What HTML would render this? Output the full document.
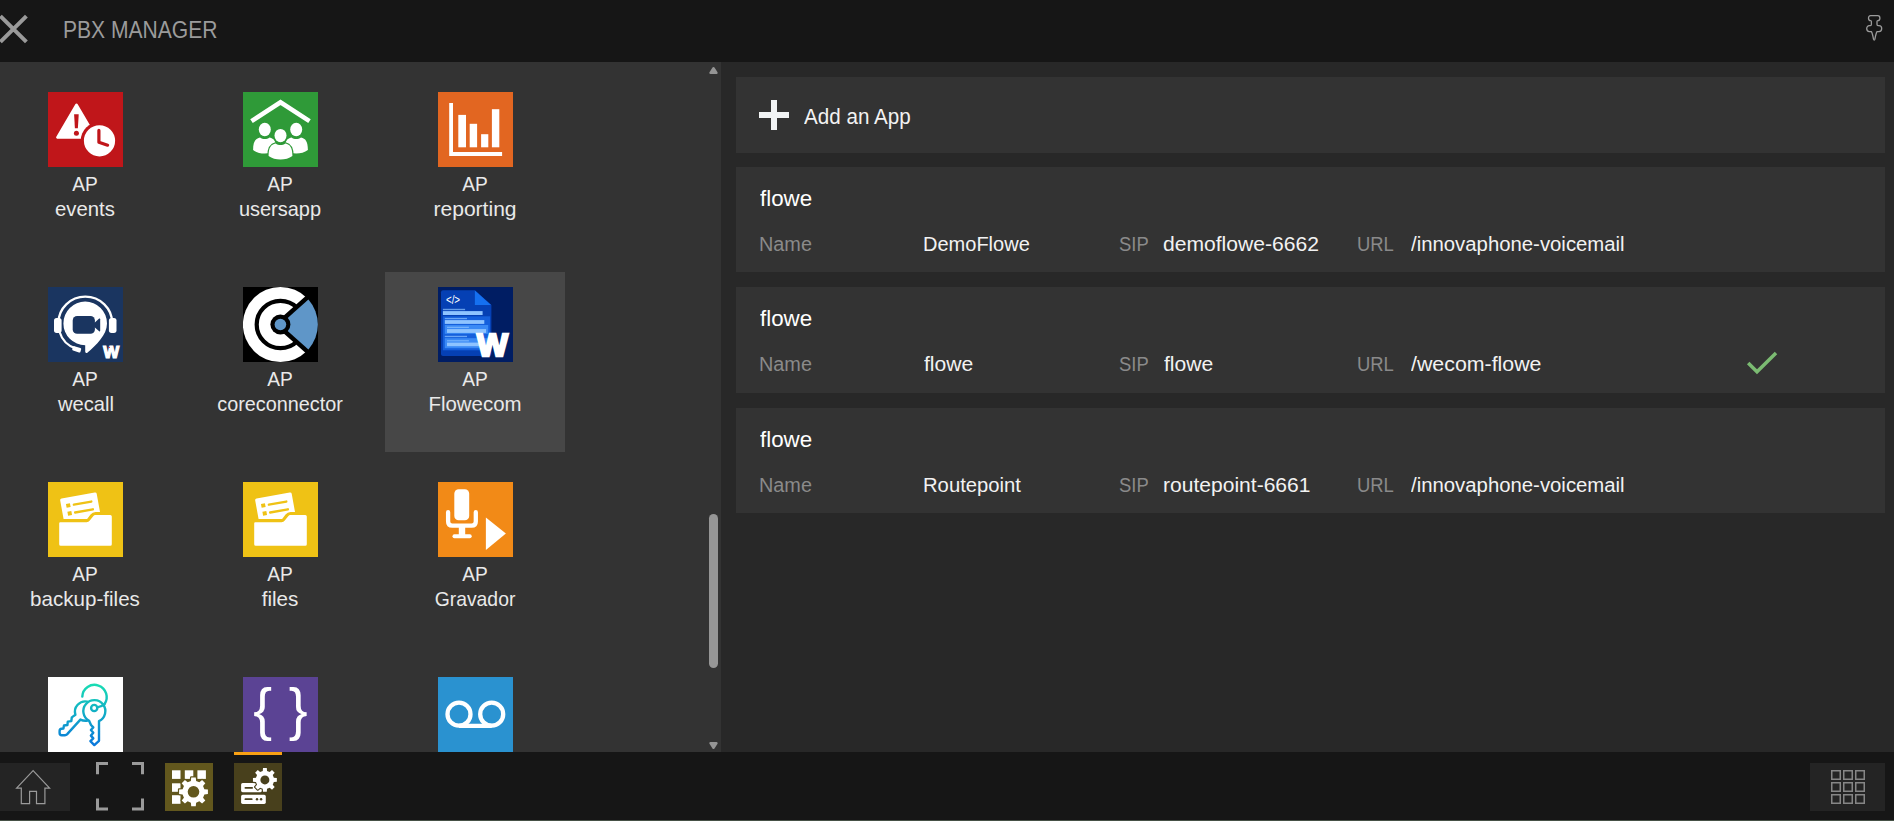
<!DOCTYPE html>
<html lang="en"><head><meta charset="utf-8"><title>PBX Manager</title>
<style>
html,body{margin:0;padding:0}
body{width:1894px;height:821px;overflow:hidden;background:#282828;position:relative;font-family:"Liberation Sans",sans-serif}
.abs{position:absolute}
.t{position:absolute;white-space:nowrap;display:block;font-weight:400}
#hdr{position:absolute;left:0;top:0;width:1894px;height:62px;background:#161616}
#apps{position:absolute;left:0;top:62px;width:721px;height:690px;background:#333333;overflow:hidden}
#inst{position:absolute;left:721px;top:62px;width:1173px;height:690px;background:#282828;overflow:hidden}
#bot{position:absolute;left:0;top:752px;width:1894px;height:68px;background:#161616}
#botline{position:absolute;left:0;top:820px;width:1894px;height:1px;background:#465146}
.tile{position:absolute;width:180px;height:180px}
.tile.sel{background:#474747}
.card{position:absolute;left:15px;width:1149px;background:#333333}
.ic{position:absolute;width:75px;height:75px;overflow:hidden}
.ic svg{display:block}
.btn{position:absolute;background:#242424}
</style></head><body>
<header id="hdr">
<svg class="abs" style="left:0px;top:0px" width="62" height="62" viewBox="0 0 62 62"><path d="M0.4 16.2 L26.4 41.9 M26.4 16.2 L0.4 41.9" stroke="#9a9a9a" stroke-width="4" fill="none"/></svg>
<span class="t" id="title" style="left:62.97px;top:13.78px;font-size:24px;line-height:31px;color:#9b9b9b;transform:scaleX(0.8776);transform-origin:0 0">PBX MANAGER</span>
<svg class="abs" style="left:1850px;top:5px" width="44" height="50" viewBox="0 0 44 50"><path d="M20.6 10.7 H27.8 C30.6 10.7 30.6 15.6 27.8 15.6 C27.2 15.6 27 16 27 16.6 V19.6 C27 20.2 27.4 20.6 28 20.6 H29 C32.6 20.6 32.6 26.6 29 26.6 H27 Q25.9 28.4 24.9 34.2 C24.6 35.4 23.8 35.4 23.5 34.2 Q22.5 28.4 21.4 26.6 H19.4 C15.8 26.6 15.8 20.6 19.4 20.6 H20.4 C21 20.6 21.4 20.2 21.4 19.6 V16.6 C21.4 16 21.2 15.6 20.6 15.6 C17.8 15.6 17.8 10.7 20.6 10.7 Z" fill="none" stroke="#9b9b9b" stroke-width="1.3" stroke-linejoin="round"/></svg>
</header>
<section id="apps">
<div class="tile" style="left:-5px;top:15px">
<div class="ic" style="left:53px;top:15px"><svg width="75" height="75" viewBox="0 0 75 75"><rect width="75" height="75" fill="#c0161a"/>
<path d="M28.5 13 L9.5 45.4 H47.6 Z" fill="#fff" stroke="#fff" stroke-width="2.8" stroke-linejoin="round"/>
<path d="M26.1 22.2 h4.6 l-0.8 14 h-3 z" fill="#c0161a"/><circle cx="28.4" cy="41.3" r="2.5" fill="#c0161a"/>
<circle cx="51.5" cy="48.8" r="18.8" fill="#c0161a"/>
<circle cx="51.5" cy="48.8" r="15.6" fill="#fff"/>
<path d="M50.9 38.4 V50.2 L59.6 53.2" stroke="#c0161a" stroke-width="3.2" fill="none" stroke-linecap="round" stroke-linejoin="round"/></svg></div>
<span class="t" id="ap00" style="left:90.49px;top:93.22px;font-size:21px;line-height:27px;color:#e9e9e9;transform:translateX(-50%) scaleX(0.9122);transform-origin:50% 0">AP</span>
<span class="t" id="nm00" style="left:90.01px;top:118.22px;font-size:21px;line-height:27px;color:#e9e9e9;transform:translateX(-50%) scaleX(0.9674);transform-origin:50% 0">events</span>
</div>
<div class="tile" style="left:190px;top:15px">
<div class="ic" style="left:53px;top:15px"><svg width="75" height="75" viewBox="0 0 75 75"><rect width="75" height="75" fill="#2f9a38"/>
<path d="M8.5 29.1 L37.5 10.2 L66.5 29.1" fill="none" stroke="#fff" stroke-width="4.6"/>
<ellipse cx="21.8" cy="37.5" rx="6" ry="6.7" fill="#fff"/><ellipse cx="53.2" cy="37.5" rx="6" ry="6.7" fill="#fff"/>
<path d="M10.1 58 C10.1 49.5 12.5 46.6 17 45.6 C20 47.6 23.6 47.6 26.6 45.6 C31 46.6 33.5 49.5 33.5 58 C27 62.8 16.5 62.8 10.1 58 Z" fill="#fff"/>
<path d="M64.9 58 C64.9 49.5 62.5 46.6 58 45.6 C55 47.6 51.4 47.6 48.4 45.6 C44 46.6 41.5 49.5 41.5 58 C48 62.8 58.5 62.8 64.9 58 Z" fill="#fff"/>
<ellipse cx="37.5" cy="43.6" rx="6" ry="6.7" fill="#fff" stroke="#2f9a38" stroke-width="2.6" paint-order="stroke"/>
<path d="M25.6 64 C25.6 55.5 28 52.6 32.6 51.6 C35.6 53.6 39.4 53.6 42.4 51.6 C47 52.6 49.4 55.5 49.4 64 C43 68.8 32 68.8 25.6 64 Z" fill="#fff" stroke="#2f9a38" stroke-width="2.6" paint-order="stroke"/></svg></div>
<span class="t" id="ap01" style="left:90.49px;top:93.22px;font-size:21px;line-height:27px;color:#e9e9e9;transform:translateX(-50%) scaleX(0.9122);transform-origin:50% 0">AP</span>
<span class="t" id="nm01" style="left:89.62px;top:118.22px;font-size:21px;line-height:27px;color:#e9e9e9;transform:translateX(-50%) scaleX(0.9510);transform-origin:50% 0">usersapp</span>
</div>
<div class="tile" style="left:385px;top:15px">
<div class="ic" style="left:53px;top:15px"><svg width="75" height="75" viewBox="0 0 75 75"><rect width="75" height="75" fill="#e26621"/>
<path d="M11.2 11 H15 V60 H64.1 V64.1 H11.2 Z" fill="#fff"/>
<rect x="20.3" y="22.9" width="7.7" height="32.4" fill="#fff"/><rect x="31.7" y="31.8" width="7.4" height="23.5" fill="#fff"/>
<rect x="43.1" y="42.2" width="7.2" height="13.1" fill="#fff"/><rect x="53.9" y="17.2" width="7.4" height="38.1" fill="#fff"/></svg></div>
<span class="t" id="ap02" style="left:90.49px;top:93.22px;font-size:21px;line-height:27px;color:#e9e9e9;transform:translateX(-50%) scaleX(0.9122);transform-origin:50% 0">AP</span>
<span class="t" id="nm02" style="left:90px;top:118.22px;font-size:21px;line-height:27px;color:#e9e9e9;transform:translateX(-50%) scaleX(1.0028);transform-origin:50% 0">reporting</span>
</div>
<div class="tile" style="left:-5px;top:210px">
<div class="ic" style="left:53px;top:15px"><svg width="75" height="75" viewBox="0 0 75 75"><rect width="75" height="75" fill="#1a3560"/>
<path d="M10.4 36 A26.9 26.3 0 0 1 64.2 36" fill="none" stroke="#fff" stroke-width="2.3"/>
<rect x="6" y="30.9" width="7.6" height="15" rx="2.6" fill="#fff"/><rect x="60.9" y="30.9" width="7.6" height="15" rx="2.6" fill="#fff"/>
<path d="M11.6 45 C14 53 20 59 28 61.6" fill="none" stroke="#fff" stroke-width="2.2"/>
<rect x="24.4" y="60" width="8.6" height="4.6" rx="1.2" fill="#fff" transform="rotate(18 28.7 62.3)"/>
<path d="M37.2 14.6 A21.8 21.8 0 0 1 59 36.4 C59 48 48 58 39.6 65.6 C38.6 66.6 37.2 66 37.2 64.6 V58.2 A21.8 21.8 0 0 1 37.2 14.6 Z" fill="#fff"/>
<rect x="24.7" y="29" width="22.2" height="17.8" rx="4.4" fill="#1a3560"/>
<path d="M46 36.2 L51.2 31.6 Q52.2 31 52.2 32.2 V43.6 Q52.2 44.8 51.2 44.2 L46 39.8 Z" fill="#1a3560"/>
<text x="55.3" y="71.2" font-family="Liberation Sans, sans-serif" font-weight="700" font-size="16.3" fill="#fff" stroke="#fff" stroke-width="1.2" stroke-linejoin="miter" textLength="15.9" lengthAdjust="spacingAndGlyphs">W</text>
<circle cx="61.2" cy="60.4" r="0.7" fill="#e02030"/></svg></div>
<span class="t" id="ap10" style="left:90.49px;top:93.22px;font-size:21px;line-height:27px;color:#e9e9e9;transform:translateX(-50%) scaleX(0.9122);transform-origin:50% 0">AP</span>
<span class="t" id="nm10" style="left:90.83px;top:118.22px;font-size:21px;line-height:27px;color:#e9e9e9;transform:translateX(-50%) scaleX(0.9604);transform-origin:50% 0">wecall</span>
</div>
<div class="tile" style="left:190px;top:210px">
<div class="ic" style="left:53px;top:15px"><svg width="75" height="75" viewBox="0 0 75 75"><rect width="75" height="75" fill="#000"/>
<circle cx="37.4" cy="37.5" r="37.5" fill="#fff"/>
<circle cx="37.4" cy="37.5" r="23.7" fill="none" stroke="#000" stroke-width="4.2"/>
<path d="M79.3 0.3 L37.4 37.5 L79.3 74.7" fill="#000" stroke="#000" stroke-width="9" stroke-linejoin="miter"/>
<path d="M37.4 37.5 L65.4 12.6 A37.5 37.5 0 0 1 65.4 62.4 Z" fill="#5f96c8"/>
<circle cx="37.4" cy="37.5" r="10" fill="#000"/><circle cx="37.4" cy="37.5" r="5.8" fill="#5f96c8"/></svg></div>
<span class="t" id="ap11" style="left:90.49px;top:93.22px;font-size:21px;line-height:27px;color:#e9e9e9;transform:translateX(-50%) scaleX(0.9122);transform-origin:50% 0">AP</span>
<span class="t" id="nm11" style="left:89.83px;top:118.22px;font-size:21px;line-height:27px;color:#e9e9e9;transform:translateX(-50%) scaleX(0.9435);transform-origin:50% 0">coreconnector</span>
</div>
<div class="tile sel" style="left:385px;top:210px">
<div class="ic" style="left:53px;top:15px"><svg width="75" height="75" viewBox="0 0 75 75"><rect width="75" height="75" fill="#001d63"/>
<path d="M5 3.3 H36.9 L53.4 18 V67.1 Q53.4 69.1 51.4 69.1 H5 Q3 69.1 3 67.1 V5.3 Q3 3.3 5 3.3 Z" fill="#0540b4"/>
<path d="M36.9 3.6 L53 18.1 H36.9 Z" fill="#1570f0"/>
<rect x="4.9" y="29.3" width="47.2" height="34" fill="#1560dc"/>
<rect x="6.8" y="38" width="43.4" height="8.8" fill="#3a8af5"/><rect x="6.8" y="51.2" width="43.4" height="10" fill="#3a8af5"/>
<g fill="#8ec4ff">
<rect x="4.9" y="21.8" width="22.2" height="1.4" opacity=".7"/><rect x="4.9" y="24.1" width="39.7" height="3.9"/>
<rect x="6.8" y="30.9" width="22.2" height="1.3" opacity=".7"/><rect x="6.8" y="33.1" width="39.5" height="3.8"/>
<rect x="9" y="39.7" width="21.9" height="1.3" opacity=".7"/><rect x="9" y="42.1" width="39.1" height="3.8"/>
<rect x="6.8" y="48.8" width="22.2" height="1.3" opacity=".7"/>
<rect x="9" y="53.2" width="21.9" height="1.2" opacity=".7"/><rect x="9" y="55.6" width="32.3" height="3.6"/>
</g>
<text x="7.9" y="17.3" font-family="Liberation Sans, sans-serif" font-size="13" fill="#fff" textLength="14.2" lengthAdjust="spacingAndGlyphs">&lt;/&gt;</text>
<text x="39" y="68.6" font-family="Liberation Sans, sans-serif" font-weight="700" font-size="31.8" fill="#fff" stroke="#fff" stroke-width="2.4" stroke-linejoin="miter" textLength="30.9" lengthAdjust="spacingAndGlyphs">W</text></svg></div>
<span class="t" id="ap12" style="left:90.48px;top:93.22px;font-size:21px;line-height:27px;color:#e9e9e9;transform:translateX(-50%) scaleX(0.9124);transform-origin:50% 0">AP</span>
<span class="t" id="nm12" style="left:90px;top:118.22px;font-size:21px;line-height:27px;color:#e9e9e9;transform:translateX(-50%) scaleX(0.9724);transform-origin:50% 0">Flowecom</span>
</div>
<div class="tile" style="left:-5px;top:405px">
<div class="ic" style="left:53px;top:15px"><svg width="75" height="75" viewBox="0 0 75 75"><rect width="75" height="75" fill="#efc215"/>
<g transform="translate(11.9 16.8) rotate(-10.3)"><rect x="0" y="0" width="37.1" height="28" rx="1.7" fill="#fff"/>
<rect x="5.05" y="6.1" width="4" height="4" fill="#efc215"/><rect x="11.5" y="7.15" width="20.1" height="2.3" rx="1.15" fill="#efc215"/>
<rect x="5.05" y="14.1" width="4" height="4" fill="#efc215"/><rect x="11.4" y="15.05" width="20.3" height="2.3" rx="1.15" fill="#efc215"/></g>
<path d="M12.2 40.2 H38.6 Q40.6 40.2 41.8 38.6 L45 34.4 Q46 33.1 47.6 33.1 H62.3 Q63.8 33.1 63.8 34.6 V62.3 Q63.8 63.8 62.3 63.8 H12.7 Q11.2 63.8 11.2 62.3 V41.2 Q11.2 40.2 12.2 40.2 Z" fill="#fff" stroke="#efc215" stroke-width="6.2" stroke-linejoin="round" paint-order="stroke"/></svg></div>
<span class="t" id="ap20" style="left:90.49px;top:93.22px;font-size:21px;line-height:27px;color:#e9e9e9;transform:translateX(-50%) scaleX(0.9122);transform-origin:50% 0">AP</span>
<span class="t" id="nm20" style="left:89.73px;top:118.22px;font-size:21px;line-height:27px;color:#e9e9e9;transform:translateX(-50%) scaleX(0.9794);transform-origin:50% 0">backup-files</span>
</div>
<div class="tile" style="left:190px;top:405px">
<div class="ic" style="left:53px;top:15px"><svg width="75" height="75" viewBox="0 0 75 75"><rect width="75" height="75" fill="#efc215"/>
<g transform="translate(11.9 16.8) rotate(-10.3)"><rect x="0" y="0" width="37.1" height="28" rx="1.7" fill="#fff"/>
<rect x="5.05" y="6.1" width="4" height="4" fill="#efc215"/><rect x="11.5" y="7.15" width="20.1" height="2.3" rx="1.15" fill="#efc215"/>
<rect x="5.05" y="14.1" width="4" height="4" fill="#efc215"/><rect x="11.4" y="15.05" width="20.3" height="2.3" rx="1.15" fill="#efc215"/></g>
<path d="M12.2 40.2 H38.6 Q40.6 40.2 41.8 38.6 L45 34.4 Q46 33.1 47.6 33.1 H62.3 Q63.8 33.1 63.8 34.6 V62.3 Q63.8 63.8 62.3 63.8 H12.7 Q11.2 63.8 11.2 62.3 V41.2 Q11.2 40.2 12.2 40.2 Z" fill="#fff" stroke="#efc215" stroke-width="6.2" stroke-linejoin="round" paint-order="stroke"/></svg></div>
<span class="t" id="ap21" style="left:90.49px;top:93.22px;font-size:21px;line-height:27px;color:#e9e9e9;transform:translateX(-50%) scaleX(0.9122);transform-origin:50% 0">AP</span>
<span class="t" id="nm21" style="left:90.34px;top:118.22px;font-size:21px;line-height:27px;color:#e9e9e9;transform:translateX(-50%) scaleX(0.9814);transform-origin:50% 0">files</span>
</div>
<div class="tile" style="left:385px;top:405px">
<div class="ic" style="left:53px;top:15px"><svg width="75" height="75" viewBox="0 0 75 75"><rect width="75" height="75" fill="#f28a17"/>
<rect x="16.3" y="7.3" width="14.9" height="31" rx="4.4" fill="#fff"/>
<path d="M10.1 30.2 V39.4 Q10.1 43.6 14.3 43.6 H33.6 Q37.8 43.6 37.8 39.4 V30.2" fill="none" stroke="#fff" stroke-width="4.3" stroke-linecap="round"/>
<rect x="20.8" y="44" width="6.4" height="10" fill="#fff"/><rect x="14.5" y="52.3" width="19.2" height="3.9" rx="1.9" fill="#fff"/>
<path d="M47.9 35.6 V67.9 L67.9 51.6 Z" fill="#fff"/></svg></div>
<span class="t" id="ap22" style="left:90.49px;top:93.22px;font-size:21px;line-height:27px;color:#e9e9e9;transform:translateX(-50%) scaleX(0.9122);transform-origin:50% 0">AP</span>
<span class="t" id="nm22" style="left:89.88px;top:118.22px;font-size:21px;line-height:27px;color:#e9e9e9;transform:translateX(-50%) scaleX(0.9223);transform-origin:50% 0">Gravador</span>
</div>
<div class="tile" style="left:-5px;top:600px">
<div class="ic" style="left:53px;top:15px"><svg width="75" height="75" viewBox="0 0 75 75"><defs><linearGradient id="kg" x1="0" y1="6" x2="0" y2="69" gradientUnits="userSpaceOnUse"><stop offset="0" stop-color="#18deb2"/><stop offset="1" stop-color="#0a76dc"/></linearGradient></defs>
<rect width="75" height="75" fill="#fff"/>
<g fill="none" stroke="url(#kg)" stroke-width="2.4" stroke-linecap="round" stroke-linejoin="round">
<path d="M34.3 19.6 A12.2 12.2 0 1 1 56.4 27.2"/>
<path d="M56.4 27.2 C54 29.4 51.6 30.2 49.2 30.4"/>
<circle cx="46.2" cy="31" r="3.1"/>
<path d="M41.1 43.8 A11 11 0 1 1 51 44.1 V63.8 L46.3 68.1 L42.4 64.2 L45.3 61.4 L42.9 58.6 L45.3 55.8 L42.9 53 L45.3 50.4 L43 48 Z"/>
<path d="M39.4 24.6 A10.4 10.4 0 0 0 27.4 37.8 L23.8 40.4 L23.3 44.1 L19.8 44.6 L19.4 48 L16 48.5 L15.4 51.6 L13.6 51.8 Q11.6 52 11.6 54 V56 Q11.6 58.2 13.8 58.2 H17 Q18.2 58.2 19 57.4 L32.4 42.6 Q35.6 44.2 39.6 43.6"/>
</g></svg></div>

</div>
<div class="tile" style="left:190px;top:600px">
<div class="ic" style="left:53px;top:15px"><svg width="75" height="75" viewBox="0 0 75 75"><rect width="75" height="75" fill="#5b4394"/>
<text x="10.3" y="52.3" font-family="Liberation Sans, sans-serif" font-size="56.5" fill="#fff">{</text>
<text x="45.8" y="52.3" font-family="Liberation Sans, sans-serif" font-size="56.5" fill="#fff">}</text></svg></div>

</div>
<div class="tile" style="left:385px;top:600px">
<div class="ic" style="left:53px;top:15px"><svg width="75" height="75" viewBox="0 0 75 75"><rect width="75" height="75" fill="#2a92d0"/>
<g fill="none" stroke="#fff" stroke-width="4.3"><circle cx="21" cy="37.2" r="11.5"/><circle cx="53.7" cy="37.2" r="11.5"/><path d="M21 48.8 H53.7"/></g></svg></div>

</div>
<svg class="abs" style="left:700px;top:0px" width="22" height="690" viewBox="0 0 22 690">
<path d="M10.5 10.8 L13.5 6.2 L16.5 10.8 Z" fill="#959595" stroke="#959595" stroke-width="2.4" stroke-linejoin="round"/>
<rect x="9" y="452" width="9" height="154" rx="4.5" fill="#969696"/>
<path d="M10.5 681.2 L13.5 685.8 L16.5 681.2 Z" fill="#959595" stroke="#959595" stroke-width="2.4" stroke-linejoin="round"/>
</svg>
</section>
<section id="inst">
<div class="card" id="cardadd" style="top:15px;height:76px">
<svg class="abs" style="left:23px;top:23px" width="30" height="30" viewBox="0 0 30 30"><path d="M12 0h6v12h12v6H18v12h-6V18H0v-6h12z" fill="#f1f3f4"/></svg>
<span class="t" id="add" style="left:68.16px;top:24.5px;font-size:22.5px;line-height:29px;color:#f2f2f2;transform:scaleX(0.9163);transform-origin:0 0">Add an App</span>
</div>
<div class="card" id="card0" style="top:105px;height:105px">
<span class="t" id="c0t" style="left:23.6px;top:17.08px;font-size:22px;line-height:29px;color:#ffffff;transform:scaleX(1.0153);transform-origin:0 0">flowe</span>
<span class="t" id="c0nl" style="left:23.46px;top:63.87px;font-size:20px;line-height:26px;color:#8a8a8a;transform:scaleX(0.9919);transform-origin:0 0">Name</span>
<span class="t" id="c0nv" style="left:187.4px;top:63.87px;font-size:20px;line-height:26px;color:#f2f2f2;transform:scaleX(1.0006);transform-origin:0 0">DemoFlowe</span>
<span class="t" id="c0sl" style="left:382.68px;top:63.87px;font-size:20px;line-height:26px;color:#8a8a8a;transform:scaleX(0.9209);transform-origin:0 0">SIP</span>
<span class="t" id="c0sv" style="left:427.33px;top:63.87px;font-size:20px;line-height:26px;color:#f2f2f2;transform:scaleX(1.0546);transform-origin:0 0">demoflowe-6662</span>
<span class="t" id="c0ul" style="left:621.28px;top:63.87px;font-size:20px;line-height:26px;color:#8a8a8a;transform:scaleX(0.9210);transform-origin:0 0">URL</span>
<span class="t" id="c0uv" style="left:674.8px;top:63.87px;font-size:20px;line-height:26px;color:#f2f2f2;transform:scaleX(1.0167);transform-origin:0 0">/innovaphone-voicemail</span>
</div>
<div class="card" id="card1" style="top:225px;height:106px">
<svg class="abs" style="left:1004px;top:58px" width="44" height="36" viewBox="0 0 44 36"><path d="M8.2 18 L17 26.8 L36 8.1" fill="none" stroke="#7bbb72" stroke-width="3.5"/></svg>
<span class="t" id="c1t" style="left:23.6px;top:17.08px;font-size:22px;line-height:29px;color:#ffffff;transform:scaleX(1.0153);transform-origin:0 0">flowe</span>
<span class="t" id="c1nl" style="left:23.46px;top:63.87px;font-size:20px;line-height:26px;color:#8a8a8a;transform:scaleX(0.9919);transform-origin:0 0">Name</span>
<span class="t" id="c1nv" style="left:188.4px;top:63.87px;font-size:20px;line-height:26px;color:#f2f2f2;transform:scaleX(1.0565);transform-origin:0 0">flowe</span>
<span class="t" id="c1sl" style="left:382.68px;top:63.87px;font-size:20px;line-height:26px;color:#8a8a8a;transform:scaleX(0.9209);transform-origin:0 0">SIP</span>
<span class="t" id="c1sv" style="left:427.8px;top:63.87px;font-size:20px;line-height:26px;color:#f2f2f2;transform:scaleX(1.0565);transform-origin:0 0">flowe</span>
<span class="t" id="c1ul" style="left:621.28px;top:63.87px;font-size:20px;line-height:26px;color:#8a8a8a;transform:scaleX(0.9210);transform-origin:0 0">URL</span>
<span class="t" id="c1uv" style="left:674.8px;top:63.87px;font-size:20px;line-height:26px;color:#f2f2f2;transform:scaleX(1.0670);transform-origin:0 0">/wecom-flowe</span>
</div>
<div class="card" id="card2" style="top:346px;height:105px">
<span class="t" id="c2t" style="left:23.6px;top:17.08px;font-size:22px;line-height:29px;color:#ffffff;transform:scaleX(1.0153);transform-origin:0 0">flowe</span>
<span class="t" id="c2nl" style="left:23.46px;top:63.87px;font-size:20px;line-height:26px;color:#8a8a8a;transform:scaleX(0.9919);transform-origin:0 0">Name</span>
<span class="t" id="c2nv" style="left:187.22px;top:63.87px;font-size:20px;line-height:26px;color:#f2f2f2;transform:scaleX(1.0122);transform-origin:0 0">Routepoint</span>
<span class="t" id="c2sl" style="left:382.68px;top:63.87px;font-size:20px;line-height:26px;color:#8a8a8a;transform:scaleX(0.9209);transform-origin:0 0">SIP</span>
<span class="t" id="c2sv" style="left:426.75px;top:63.87px;font-size:20px;line-height:26px;color:#f2f2f2;transform:scaleX(1.0528);transform-origin:0 0">routepoint-6661</span>
<span class="t" id="c2ul" style="left:621.28px;top:63.87px;font-size:20px;line-height:26px;color:#8a8a8a;transform:scaleX(0.9210);transform-origin:0 0">URL</span>
<span class="t" id="c2uv" style="left:674.8px;top:63.87px;font-size:20px;line-height:26px;color:#f2f2f2;transform:scaleX(1.0167);transform-origin:0 0">/innovaphone-voicemail</span>
</div>
</section>
<footer id="bot">
<div class="abs" style="left:0px;top:11px;width:70px;height:48px;background:#242424"></div>
<svg class="abs" style="left:0px;top:11px" width="70" height="48" viewBox="0 0 70 48"><path d="M33.1 7.6 L16.6 25.2 H21.3 V40.6 H29.6 V28.4 H36.5 V40.6 H44.9 V25.2 H49.6 Z" fill="none" stroke="#9a9a9a" stroke-width="1.2"/></svg>
<svg class="abs" style="left:96px;top:10.2px" width="48" height="49" viewBox="0 0 48 49"><path d="M1.5 12.2 V1.5 H12 M36 1.5 H46.5 V12.2 M46.5 36.4 V47.1 H36 M12 47.1 H1.5 V36.4" fill="none" stroke="#9a9a9a" stroke-width="3"/></svg>
<svg class="abs" style="left:165px;top:11px" width="48" height="48" viewBox="0 0 48 48"><rect width="48" height="48" fill="#62571d"/>
<g fill="#fff"><rect x="7" y="7.3" width="8.5" height="8.6"/><rect x="19.8" y="7.3" width="8.5" height="8.6"/><rect x="32.4" y="7.3" width="8.5" height="8.6"/>
<rect x="7" y="20.3" width="8.5" height="8.5"/><rect x="7" y="32.2" width="8.5" height="8.6"/></g>
<path d="M25.89 17.91 L26.22 14.38 L30.78 14.38 L31.11 17.91 L34.35 19.25 L37.08 16.99 L40.31 20.22 L38.05 22.95 L39.39 26.19 L42.92 26.52 L42.92 31.08 L39.39 31.41 L38.05 34.65 L40.31 37.38 L37.08 40.61 L34.35 38.35 L31.11 39.69 L30.78 43.22 L26.22 43.22 L25.89 39.69 L22.65 38.35 L19.92 40.61 L16.69 37.38 L18.95 34.65 L17.61 31.41 L14.08 31.08 L14.08 26.52 L17.61 26.19 L18.95 22.95 L16.69 20.22 L19.92 16.99 L22.65 19.25 Z" fill="#fff" stroke="#62571d" stroke-width="2.4" stroke-linejoin="round" paint-order="stroke"/>
<circle cx="28.5" cy="28.8" r="5.8" fill="#62571d"/></svg>
<svg class="abs" style="left:234px;top:11px" width="48" height="48" viewBox="0 0 48 48"><rect width="48" height="48" fill="#48401c"/>
<rect x="7.1" y="19.9" width="20.9" height="9.3" rx="1.6" fill="#fff"/><rect x="10.5" y="24.1" width="8.5" height="1.7" rx=".8" fill="#48401c"/>
<rect x="7.1" y="31.8" width="24.7" height="9.1" rx="1.6" fill="#fff"/><rect x="10.5" y="35.3" width="8.1" height="1.8" rx=".9" fill="#48401c"/>
<circle cx="23" cy="36.2" r="1.2" fill="#48401c"/><circle cx="27.1" cy="36.2" r="1.2" fill="#48401c"/>
<path d="M28.75 7.95 L29.01 4.95 L32.79 4.95 L33.05 7.95 L35.71 9.06 L38.01 7.11 L40.69 9.79 L38.74 12.09 L39.85 14.75 L42.85 15.01 L42.85 18.79 L39.85 19.05 L38.74 21.71 L40.69 24.01 L38.01 26.69 L35.71 24.74 L33.05 25.85 L32.79 28.85 L29.01 28.85 L28.75 25.85 L26.09 24.74 L23.79 26.69 L21.11 24.01 L23.06 21.71 L21.95 19.05 L18.95 18.79 L18.95 15.01 L21.95 14.75 L23.06 12.09 L21.11 9.79 L23.79 7.11 L26.09 9.06 Z" fill="#fff" stroke="#48401c" stroke-width="2.2" stroke-linejoin="round" paint-order="stroke"/>
<circle cx="30.9" cy="16.9" r="4.5" fill="#48401c"/></svg>
<div class="abs" style="left:234px;top:0px;width:48px;height:3px;background:#f9a114"></div>
<div class="abs" style="left:1810px;top:11px;width:75px;height:48px;background:#242424"></div>
<svg class="abs" style="left:1810px;top:11px" width="75" height="48" viewBox="0 0 75 48"><g fill="none" stroke="#868686" stroke-width="1.5"><rect x="21.75" y="7.75" width="8.5" height="8.5"/><rect x="21.75" y="19.75" width="8.5" height="8.5"/><rect x="21.75" y="31.75" width="8.5" height="8.5"/><rect x="33.75" y="7.75" width="8.5" height="8.5"/><rect x="33.75" y="19.75" width="8.5" height="8.5"/><rect x="33.75" y="31.75" width="8.5" height="8.5"/><rect x="45.75" y="7.75" width="8.5" height="8.5"/><rect x="45.75" y="19.75" width="8.5" height="8.5"/><rect x="45.75" y="31.75" width="8.5" height="8.5"/></g></svg>
</footer>
<div id="botline"></div>
</body></html>
